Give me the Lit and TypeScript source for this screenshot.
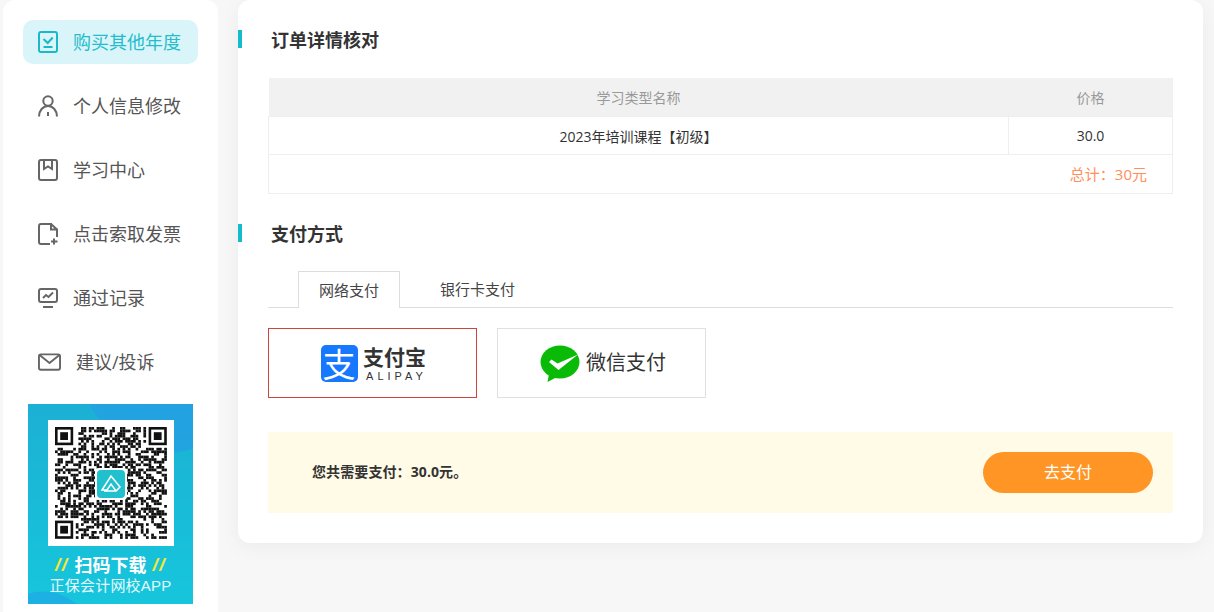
import { LitElement, html, css, svg } from 'lit';
import { customElement } from 'lit/decorators.js';

const navItems = [
   { label: '购买其他年度', icon: 'order', active: true },
   { label: '个人信息修改', icon: 'person' },
   { label: '学习中心', icon: 'book' },
   { label: '点击索取发票', icon: 'file' },
   { label: '通过记录', icon: 'chart' },
   { label: '建议/投诉', icon: 'mail' },
];

const navIcon = (name: string) => {
   if (name === 'order') {
      return html`<svg class="icon" viewBox="0 0 20 22"><rect x="1" y="1" width="18" height="20" rx="2"></rect><path d="M5.500 8l4.200 4 5-5.500M5.500 16h9"></path></svg>`;
   }
   if (name === 'person') {
      return html`<svg class="icon" viewBox="0 0 20 22"><circle cx="10" cy="6" r="4.700"></circle><path d="M1 21.500c0-6 4-10.500 9-10.500s9 4.500 9 10.500M10 17v4"></path></svg>`;
   }
   if (name === 'book') {
      return html`<svg class="icon" viewBox="0 0 20 22"><rect x="1" y="1" width="18" height="20" rx="2"></rect><path d="M6 1v9l4-2.500 4 2.500V1"></path></svg>`;
   }
   if (name === 'file') {
      return html`<svg class="icon" viewBox="0 0 20 22"><path d="M12 21H3a2 2 0 0 1-2-2V3a2 2 0 0 1 2-2h10v5.500h6V14M13 1l6 5.500M16 15.500v6M13 18.500h6.500"></path></svg>`;
   }
   if (name === 'chart') {
      return html`<svg class="icon" viewBox="0 0 20 22"><rect x="1" y="2" width="18" height="13" rx="2"></rect><path d="M5 11l3-3 2.500 2 4.500-4.500M5 20h10"></path></svg>`;
   }
   return html`<svg class="icon mail" viewBox="0 0 24 20"><rect x="1" y="2" width="22" height="16" rx="2"></rect><path d="M2 3l10 8 10-8"></path></svg>`;
};

// fake qr modules, same seed every time so the picture stays put
const qrModules = () => {
   const size = 43;
   const cell = 2.6;
   const parts = [];
   let seed = 20231;
   const next = () => {
      seed = (seed * 16807) % 2147483647;
      return seed / 2147483647;
   };
   const inFinder = (x: number, y: number) =>
      (x < 8 && y < 8) || (x > size - 9 && y < 8) || (x < 8 && y > size - 9);
   for (let y = 0; y < size; y++) {
      for (let x = 0; x < size; x++) {
         if (inFinder(x, y)) continue;
         if (next() > 0.5) {
            parts.push(svg`<rect x=${x * cell} y=${y * cell} width=${cell + 0.1} height=${cell + 0.1}></rect>`);
         }
      }
   }
   const finder = (x: number, y: number) => svg`
      <rect x=${x * cell} y=${y * cell} width=${7 * cell} height=${7 * cell}></rect>
      <rect x=${(x + 1) * cell} y=${(y + 1) * cell} width=${5 * cell} height=${5 * cell} fill="#fff"></rect>
      <rect x=${(x + 2) * cell} y=${(y + 2) * cell} width=${3 * cell} height=${3 * cell}></rect>`;
   return [parts, finder(0, 0), finder(size - 7, 0), finder(0, size - 7)];
};

@customElement('app-root')
export class AppRoot extends LitElement {
   static styles = css`
   :host {
      display: block;
      height: 612px;
      overflow: hidden;
      background-color: #f7f7f7;
      font-family: 'Open Sans', 'Noto Sans CJK SC', sans-serif;
      color: #333;
   }
   .page {
      display: flex;
      align-items: flex-start;
      gap: 20px;
      padding-left: 3px;
   }
   .sidebar {
      width: 215px;
      height: 612px;
      flex: none;
      box-sizing: border-box;
      padding: 20px 20px 0;
      display: flex;
      flex-direction: column;
      gap: 20px;
      background-color: #fff;
      border-radius: 12px 12px 0 0;
   }
   .nav-item {
      height: 44px;
      display: flex;
      align-items: center;
      gap: 15px;
      padding-left: 15px;
      border-radius: 10px;
      font-size: 18px;
      line-height: 44px;
      color: #555;
   }
   .nav-item.active {
      background-color: #daf5fa;
      color: #25bccb;
   }
   .icon {
      width: 20px;
      height: 22px;
      flex: none;
      fill: none;
      stroke: #666;
      stroke-width: 2;
   }
   .icon.mail {
      width: 23px;
      height: 20px;
   }
   .active .icon {
      stroke: #1ab9c7;
   }
   .banner {
      width: 165px;
      height: 200px;
      margin-left: 5px;
      box-sizing: border-box;
      padding-top: 16px;
      display: flex;
      flex-direction: column;
      align-items: center;
      background:
         radial-gradient(circle at 140px -40px, #229fe2 0, #22a4e0 88px, transparent 89px),
         radial-gradient(circle at 15px 238px, #1db0e2 0, #1db0e2 50px, transparent 51px),
         linear-gradient(#1cb0d4, #16c6dc);
      color: #fff;
   }
   .qr {
      width: 126px;
      height: 126px;
      flex: none;
      background-color: #fff;
   }
   .scan {
      margin-top: 8px;
      display: flex;
      align-items: center;
      gap: 6px;
      height: 22px;
      font-size: 18px;
      line-height: 22px;
      font-weight: 700;
   }
   .slashes {
      color: #f4e73a;
      font-style: italic;
      font-size: 19px;
      font-weight: 800;
      letter-spacing: 1.500px;
      font-family: 'Liberation Sans', sans-serif;
   }
   .app-name {
      height: 20px;
      font-size: 15px;
      line-height: 20px;
      letter-spacing: 0.2px;
      color: #e4fbff;
      white-space: nowrap;
      font-family: 'Liberation Sans', 'Noto Sans CJK SC', sans-serif;
   }
   .card {
      width: 965px;
      flex: none;
      box-sizing: border-box;
      padding: 30px;
      background-color: #fff;
      border-radius: 12px;
      box-shadow: 0 4px 20px rgba(0, 0, 0, 0.05);
   }
   .title {
      margin-left: -30px;
      height: 18px;
      padding-left: 29px;
      border-left: 4px solid #12bdcb;
      font-size: 18px;
      line-height: 20px;
      font-weight: 700;
      color: #333;
   }
   .title.second {
      margin-top: 30px;
   }
   table {
      width: 905px;
      margin-top: 30px;
      border-collapse: collapse;
      table-layout: fixed;
      font-size: 14px;
   }
   th {
      height: 38px;
      padding: 0;
      background-color: #f1f1f1;
      font-weight: 400;
      color: #999;
   }
   td {
      height: 37px;
      padding: 0;
      text-align: center;
      border: 1px solid #eee;
   }
   td.total {
      height: 36px;
      padding: 0 25px 2px 0;
      text-align: right;
      font-size: 15px;
      color: #ff8f5c;
   }
   .tabs {
      margin-top: 29px;
      height: 37px;
      padding-left: 30px;
      display: flex;
      gap: 20px;
      border-bottom: 1px solid #ddd;
      box-sizing: border-box;
      font-size: 15px;
      line-height: 36px;
      color: #444;
   }
   .tab {
      height: 37px;
      box-sizing: border-box;
      padding: 0 20px;
      white-space: nowrap;
   }
   .tab.active {
      background-color: #fff;
      border: 1px solid #ddd;
      border-bottom: none;
   }
   .methods {
      margin-top: 20px;
      display: flex;
      gap: 20px;
   }
   .method {
      width: 209px;
      height: 70px;
      box-sizing: border-box;
      display: flex;
      align-items: center;
      justify-content: center;
      border: 1px solid #e0e0e0;
   }
   .method.selected {
      padding-left: 2px;
      border-color: #c9473c;
   }
   .ali-mark {
      width: 37px;
      height: 37px;
      flex: none;
      border-radius: 5px;
      background-color: #1677ff;
      color: #fff;
      font-size: 33px;
      line-height: 36px;
      text-align: center;
      font-family: 'Noto Sans CJK SC', sans-serif;
   }
   .ali-words {
      margin-left: 5px;
      width: 64px;
      display: flex;
      flex-direction: column;
      align-items: center;
      color: #333;
   }
   .ali-cn {
      font-size: 21px;
      line-height: 25px;
      font-weight: 700;
      white-space: nowrap;
   }
   .ali-en {
      font-size: 11px;
      line-height: 12px;
      letter-spacing: 4px;
      margin-right: -4px;
      font-family: 'Liberation Sans', sans-serif;
   }
   .wx-mark {
      width: 40px;
      height: 37px;
      flex: none;
   }
   .wx-name {
      margin-left: 6px;
      font-size: 20px;
      line-height: 28px;
      color: #333;
      white-space: nowrap;
   }
   .method.wx {
      padding-left: 3px;
   }
   .pay-bar {
      margin-top: 34px;
      height: 81px;
      box-sizing: border-box;
      padding: 0 20px 0 44px;
      display: flex;
      align-items: center;
      justify-content: space-between;
      background-color: #fffbe6;
      font-size: 14px;
      font-weight: 700;
   }
   .pay-note {
      padding-bottom: 3px;
      letter-spacing: 0.1px;
   }
   .pay-btn {
      width: 170px;
      height: 41px;
      border: none;
      padding: 0;
      border-radius: 21px;
      background-color: #ff9525;
      color: #fff;
      font-family: inherit;
      font-size: 16px;
      line-height: 41px;
   }
`;

   render() {
      return html`
         <div class="page">
            <aside class="sidebar">
               ${navItems.map(item => html`
                  <div class="nav-item ${item.active ? 'active' : ''}">
                     ${navIcon(item.icon)}
                     <span>${item.label}</span>
                  </div>
               `)}
               <div class="banner">
                  <svg class="qr" viewBox="0 0 126 126">
                     <g transform="translate(7 7)" fill="#111">${qrModules()}</g>
                     <rect x="47" y="48" width="32" height="32" rx="4" fill="#fff"></rect>
                     <rect x="49" y="50" width="28" height="28" rx="4" fill="#20c0cf"></rect>
                     <path d="M54 70l9-14 9 11-4 4-5-7-4 6zM56 71h11" fill="none" stroke="#fff" stroke-width="1.500"></path>
                  </svg>
                  <div class="scan"><span class="slashes">//</span><span>扫码下载</span><span class="slashes">//</span></div>
                  <div class="app-name">正保会计网校APP</div>
               </div>
            </aside>
            <main class="card">
               <div class="title">订单详情核对</div>
               <table>
                  <colgroup><col /><col style="width: 164px" /></colgroup>
                  <tr><th>学习类型名称</th><th>价格</th></tr>
                  <tr><td>2023年培训课程【初级】</td><td>30.0</td></tr>
                  <tr><td class="total" colspan="2">总计：30元</td></tr>
               </table>
               <div class="title second">支付方式</div>
               <div class="tabs">
                  <div class="tab active">网络支付</div>
                  <div class="tab">银行卡支付</div>
               </div>
               <div class="methods">
                  <div class="method selected">
                     <div class="ali-mark">支</div>
                     <div class="ali-words">
                        <span class="ali-cn">支付宝</span>
                        <span class="ali-en">ALIPAY</span>
                     </div>
                  </div>
                  <div class="method wx">
                     <svg class="wx-mark" viewBox="0 0 40 37">
                        <ellipse cx="20" cy="17" rx="19.500" ry="16.500" fill="#09bb07"></ellipse>
                        <path d="M9 29l-1.500 8 9.500-5z" fill="#09bb07"></path>
                        <path d="M9 17l2.500-2.500 6 4L38 9.500 18.500 25z" fill="#fff"></path>
                     </svg>
                     <span class="wx-name">微信支付</span>
                  </div>
               </div>
               <div class="pay-bar">
                  <span class="pay-note">您共需要支付：30.0元。</span>
                  <button class="pay-btn">去支付</button>
               </div>
            </main>
         </div>
      `;
   }
}
